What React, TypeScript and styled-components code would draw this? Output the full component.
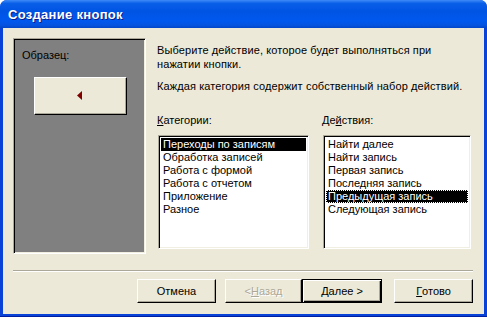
import * as React from 'react'
import styled, { createGlobalStyle } from 'styled-components'

const GlobalStyle = createGlobalStyle`
  html, body {
    margin: 0;
    padding: 0;
    background: #ffffff;
  }
  body {
    font-family: Tahoma, 'Liberation Sans', Arial, sans-serif;
    font-size: 11px;
    color: #000;
  }
`

const Window = styled.div`
  width: 487px;
  height: 317px;
  display: flex;
  flex-direction: column;
  background: #0842d6;
  border-radius: 7px 7px 0 0;
  overflow: hidden;
  box-sizing: border-box;
  border-bottom: 1px solid #001ea0;
`

const TitleBar = styled.div`
  height: 28px;
  flex: 0 0 28px;
  display: flex;
  align-items: center;
  padding-left: 8px;
  padding-top: 1px;
  box-sizing: border-box;
  background: linear-gradient(180deg, #3d8af7 0%, #0a5fe8 12%, #0054e3 40%, #0058ee 75%, #0553e0 90%, #0246c9 100%);
  color: #fff;
  font-family: 'Liberation Sans', Arial, sans-serif;
  font-weight: bold;
  font-size: 13px;
  letter-spacing: 0.3px;
  text-shadow: 1px 1px 0 #0a1e8c;
`

const Frame = styled.div`
  flex: 1;
  margin: 0 3px 2px 3px;
  background: #ece9d8;
  padding: 10px 10px 11px 10px;
  display: flex;
  flex-direction: column;
`

const TopRow = styled.div`
  display: flex;
  height: 216px;
`

const SunkenBox = styled.div`
  box-sizing: border-box;
  border-style: solid;
  border-width: 1px;
  border-color: #aca899 #ffffff #ffffff #aca899;
  box-shadow: inset 1px 1px 0 #000000, inset -1px -1px 0 #f1efe2;
`

const SamplePanel = styled(SunkenBox)`
  width: 133px;
  height: 216px;
  background: #808080;
  padding: 9px 8px;
  display: flex;
  flex-direction: column;
`

const SampleLabel = styled.div`
  line-height: 14px;
`

const SampleButton = styled.div`
  margin: 15px 0 0 12px;
  width: 93px;
  height: 38px;
  box-sizing: border-box;
  background: #ece9d8;
  border-style: solid;
  border-width: 1px;
  border-color: #ffffff #000000 #000000 #ffffff;
  box-shadow: inset -1px -1px 0 #aca899;
  display: flex;
  align-items: center;
  justify-content: center;
  padding: 0 2px 2px 0;
`

const RightColumn = styled.div`
  margin-left: 11px;
  flex: 1;
  display: flex;
  flex-direction: column;
  padding-top: 5px;
`

const Paragraph = styled.p<{ $gap: number }>`
  margin: 0 0 ${(p) => p.$gap}px 0;
  line-height: 14px;
  letter-spacing: 0.1px;
`

const ListsGrid = styled.div`
  display: grid;
  grid-template-columns: 151px 148px;
  column-gap: 14px;
  padding-left: 1px;
`

const ListColumn = styled.div`
  display: flex;
  flex-direction: column;
`

const ListLabel = styled.div`
  line-height: 14px;
  margin-left: -1px;
  margin-bottom: 8px;
`

const ListBox = styled(SunkenBox)`
  height: 114px;
  background: #ffffff;
  padding: 2px;
`

const ListItem = styled.div<{ $selected?: boolean; $focused?: boolean }>`
  height: 13px;
  line-height: 13px;
  padding-left: 2px;
  white-space: nowrap;
  box-sizing: border-box;
  background: ${(p) => (p.$selected ? '#000000' : 'transparent')};
  color: ${(p) => (p.$selected ? '#ffffff' : '#000000')};
  outline: ${(p) => (p.$focused ? '1px dotted #ffffff' : 'none')};
  outline-offset: -1px;
`

const Separator = styled.div`
  margin-top: 16px;
  height: 2px;
  border-top: 1px solid #aca899;
  border-bottom: 1px solid #ffffff;
  box-sizing: border-box;
  margin-right: 1px;
`

const ButtonRow = styled.div`
  margin-top: 7px;
  display: flex;
  justify-content: flex-end;
  padding-right: 1px;
`

const Button = styled.div<{ $gap?: number; $disabled?: boolean; $default?: boolean; $width?: number }>`
  width: ${(p) => p.$width ?? 79}px;
  height: 24px;
  margin-left: ${(p) => p.$gap ?? 0}px;
  box-sizing: border-box;
  background: #ece9d8;
  display: flex;
  align-items: center;
  justify-content: center;
  color: ${(p) => (p.$disabled ? '#aca899' : '#000000')};
  text-shadow: ${(p) => (p.$disabled ? '1px 1px 0 #ffffff' : 'none')};
  border-style: solid;
  border-width: 1px;
  border-color: #ffffff #000000 #000000 #ffffff;
  box-shadow: inset -1px -1px 0 #aca899;
  ${(p) =>
    p.$default &&
    `
    border: 1px solid #000000;
    box-shadow: inset 1px 1px 0 #ffffff, inset -1px -1px 0 #000000, inset -2px -2px 0 #aca899;
  `}
`

const categories = ['Переходы по записям', 'Обработка записей', 'Работа с формой', 'Работа с отчетом', 'Приложение', 'Разное']
const actions = ['Найти далее', 'Найти запись', 'Первая запись', 'Последняя запись', 'Предыдущая запись', 'Следующая запись']

const App: React.FunctionComponent = () => {
  return (
    <>
      <GlobalStyle />
      <Window>
        <TitleBar>Создание кнопок</TitleBar>
        <Frame>
          <TopRow>
            <SamplePanel>
              <SampleLabel>Образец:</SampleLabel>
              <SampleButton>
                <svg width='5' height='9' viewBox='0 0 5 9'>
                  <polygon points='5,0 5,9 0,4.5' fill='#800000' />
                </svg>
              </SampleButton>
            </SamplePanel>
            <RightColumn>
              <Paragraph $gap={8}>
                Выберите действие, которое будет выполняться при
                <br />
                нажатии кнопки.
              </Paragraph>
              <Paragraph $gap={20}>Каждая категория содержит собственный набор действий.</Paragraph>
              <ListsGrid>
                <ListColumn>
                  <ListLabel>
                    <u>К</u>атегории:
                  </ListLabel>
                  <ListBox>
                    {categories.map((c, i) => (
                      <ListItem key={c} $selected={i === 0}>
                        {c}
                      </ListItem>
                    ))}
                  </ListBox>
                </ListColumn>
                <ListColumn>
                  <ListLabel>
                    Де<u>й</u>ствия:
                  </ListLabel>
                  <ListBox>
                    {actions.map((a, i) => (
                      <ListItem key={a} $selected={i === 4} $focused={i === 4}>
                        {a}
                      </ListItem>
                    ))}
                  </ListBox>
                </ListColumn>
              </ListsGrid>
            </RightColumn>
          </TopRow>
          <Separator />
          <ButtonRow>
            <Button>Отмена</Button>
            <Button $gap={9} $disabled $width={77}>
              &lt; <u>Н</u>азад
            </Button>
            <Button $default $width={80}>
              <u>Д</u>алее &gt;
            </Button>
            <Button $gap={12}>
              <u>Г</u>отово
            </Button>
          </ButtonRow>
        </Frame>
      </Window>
    </>
  )
}

export default App
